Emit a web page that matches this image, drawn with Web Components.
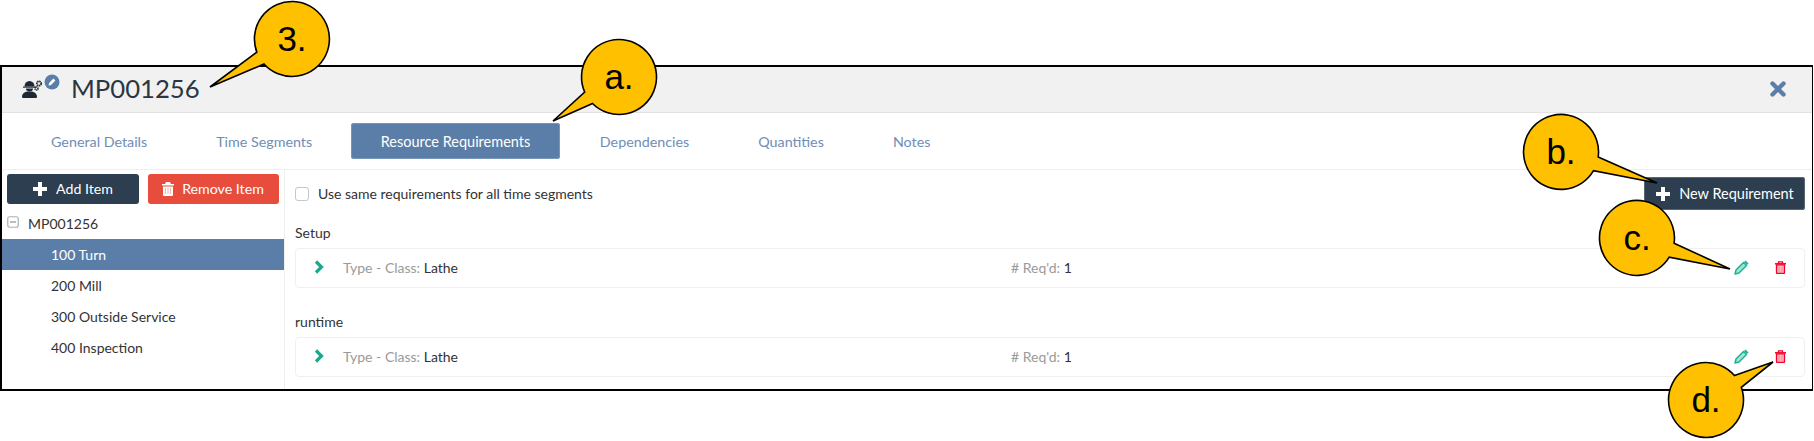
<!DOCTYPE html>
<html>
<head>
<meta charset="utf-8">
<title>MP001256</title>
<style>
  html, body { margin: 0; background: #fff; }
  body { font-family: "Lato", "Liberation Sans", sans-serif; color: #333; width: 1814px; height: 441px; overflow: hidden; position: relative; }
</style>
</head>
<body>
<mp-window>
  <mp-header slot="header" title="MP001256"></mp-header>
  <mp-tab slot="tabs">General Details</mp-tab>
  <mp-tab slot="tabs">Time Segments</mp-tab>
  <mp-tab slot="tabs" active>Resource Requirements</mp-tab>
  <mp-tab slot="tabs">Dependencies</mp-tab>
  <mp-tab slot="tabs">Quantities</mp-tab>
  <mp-tab slot="tabs">Notes</mp-tab>
  <mp-sidebar slot="side">
    <mp-button slot="buttons" icon="plus" tone="dark">Add Item</mp-button>
    <mp-button slot="buttons" icon="trash" tone="red">Remove Item</mp-button>
    <tree-row root>MP001256</tree-row>
    <tree-row selected>100 Turn</tree-row>
    <tree-row>200 Mill</tree-row>
    <tree-row>300 Outside Service</tree-row>
    <tree-row>400 Inspection</tree-row>
  </mp-sidebar>
  <mp-requirements slot="main">
    <req-section label="Setup" type="Lathe" count="1"></req-section>
    <req-section label="runtime" type="Lathe" count="1" second></req-section>
  </mp-requirements>
</mp-window>
<call-out text="3." cx="292" cy="39" tip="210,87" a="264,64" b="257,52"></call-out>
<call-out text="a." cx="619" cy="77" tip="553,121" a="593,103" b="585,92"></call-out>
<call-out text="b." cx="1561" cy="152" tip="1657,183" a="1598,157" b="1594,171"></call-out>
<call-out text="c." cx="1637" cy="238" tip="1730,269" a="1673,243" b="1669,257"></call-out>
<call-out text="d." cx="1706" cy="400" tip="1773,362" a="1734,376" b="1742,387"></call-out>

<script>
const ICONS = {
  plus: `<svg width="16" height="16" viewBox="0 0 16 16"><path d="M6 1h4v5h5v4h-5v5H6v-5H1V6h5z" fill="#fff"/></svg>`,
  trash: `<svg width="12" height="14" viewBox="0 0 12 14"><path d="M4 0h4l1 2h3v1.500H0V2h3zM1 4.500h10V13a1 1 0 0 1-1 1H2a1 1 0 0 1-1-1z" fill="#fff"/><path d="M3.500 6v6M6 6v6M8.500 6v6" stroke="#f3b1a9" stroke-width="1"/></svg>`
};

class MpWindow extends HTMLElement {
  constructor() {
    super();
    this.attachShadow({ mode: "open" });
    this.shadowRoot.innerHTML = `
      <style>
        :host { display: flex; flex-direction: column; box-sizing: border-box; width: 1813px; height: 326px; margin: 65px 0 0 0; border: 2px solid #000; border-right-width: 1px; background: #fff; }
        .tabs { display: flex; gap: 10px; height: 36px; padding: 10px 19.500px; border-bottom: 1px solid #eee; }
        .body { flex: 1; display: flex; min-height: 0; }
      </style>
      <slot name="header"></slot>
      <div class="tabs"><slot name="tabs"></slot></div>
      <div class="body"><slot name="side"></slot><slot name="main"></slot></div>
    `;
  }
}

class MpHeader extends HTMLElement {
  constructor() {
    super();
    this.attachShadow({ mode: "open" });
    const title = this.getAttribute("title") || "";
    this.shadowRoot.innerHTML = `
      <style>
        :host { display: flex; align-items: center; box-sizing: border-box; height: 46px; padding: 0 26px 0 19px; background: #f1f1f1; border-bottom: 1px solid #e2e2e2; }
        h1 { margin: -3px 0 0 8px; font: 400 25.700px/30px "Lato", sans-serif; color: #2b3642; }
        .x { margin: -2px 0 0 auto; display: flex; }
        .ico { display: flex; margin-top: 1px; }
        svg { overflow: visible; }
      </style>
      <div class="ico">
        <svg width="42" height="30" viewBox="0 0 42 30">
          <path d="M3.500 11.500a5 5.500 0 0 1 10 0z" fill="#1c2833"/>
          <path d="M2 11.500h13v1.200H2z" fill="#1c2833"/>
          <path d="M5 13.500h7a3.500 3 0 0 1-7 0z" fill="#1c2833"/>
          <path d="M1 22c0-3.500 2.500-5.500 7.500-5.500S16 18.500 16 22a1 1 0 0 1-1 1H2a1 1 0 0 1-1-1z" fill="#1c2833"/>
          <circle cx="18" cy="8.500" r="2.200" fill="none" stroke="#1c2833" stroke-width="1.800" stroke-dasharray="1.400 .5"/>
          <circle cx="15.500" cy="13.500" r="1.500" fill="none" stroke="#1c2833" stroke-width="1.500" stroke-dasharray="1.100 .4"/>
          <circle cx="31" cy="7" r="7.500" fill="#5b7ea8"/>
          <path d="M27.500 10.500l.6-2.600 4.300-4.300 2 2-4.300 4.300z" fill="#fff"/>
        </svg>
      </div>
      <h1>${title}</h1>
      <div class="x">
        <svg width="16" height="16" viewBox="0 0 16 16"><path d="M2.500 2.500l11 11M13.500 2.500l-11 11" stroke="#5b7ea8" stroke-width="4.400" stroke-linecap="round"/></svg>
      </div>
    `;
  }
}

class MpTab extends HTMLElement {
  constructor() {
    super();
    this.attachShadow({ mode: "open" });
    this.shadowRoot.innerHTML = `
      <style>
        :host { display: flex; align-items: center; padding: 0 29.500px; height: 36px; border-radius: 3px; font-size: 14.300px; color: #6f8db5; white-space: nowrap; }
        :host([active]) { margin-left: -1px; padding: 0 30px; font-size: 14.500px; background: #5b7ea8; color: #fff; box-shadow: inset 0 0 0 1px #7896ba; }
      </style>
      <slot></slot>
    `;
  }
}

class MpButton extends HTMLElement {
  constructor() {
    super();
    this.attachShadow({ mode: "open" });
    const icon = this.getAttribute("icon");
    this.shadowRoot.innerHTML = `
      <style>
        :host { display: flex; align-items: center; justify-content: center; gap: 8px; box-sizing: border-box; height: 30px; border-radius: 3px; font-size: 14.500px; color: #fff; white-space: nowrap; }
        :host([tone]) { font-size: 14.200px; padding: 0 1px 1px 0; }
        :host([tone="dark"]) { background: #2c3e50; }
        :host([tone="red"]) { background: #e74c3c; }
        .i { display: flex; }
      </style>
      <span class="i">${ICONS[icon]}</span><slot></slot>
    `;
  }
}

class MpSidebar extends HTMLElement {
  constructor() {
    super();
    this.attachShadow({ mode: "open" });
    this.shadowRoot.innerHTML = `
      <style>
        :host { display: block; box-sizing: border-box; width: 283px; flex: none; border-right: 1px solid #eee; }
        .buttons { display: grid; grid-template-columns: 132px 131px; gap: 9px; padding: 4px 0 0 5px; }
      </style>
      <div class="buttons"><slot name="buttons"></slot></div>
      <slot></slot>
    `;
  }
}

class TreeRow extends HTMLElement {
  constructor() {
    super();
    this.attachShadow({ mode: "open" });
    const root = this.hasAttribute("root");
    this.shadowRoot.innerHTML = `
      <style>
        :host { display: flex; align-items: center; height: 31px; padding-left: 49px; font-size: 14px; color: #333; }
        :host([root]) { box-sizing: border-box; height: 35px; padding: 3px 0 0 5px; gap: 9px; }
        :host([selected]) { background: #5b7ea8; color: #fff; }
        svg { display: block; margin-top: -2px; }
      </style>
      ${root ? `<svg width="12" height="12" viewBox="0 0 12 12"><rect x=".75" y=".75" width="10.500" height="10.500" rx="2" fill="none" stroke="#a9b0b5" stroke-width="1.200"/><path d="M3 6h6" stroke="#8c9499" stroke-width="1.200"/></svg>` : ""}
      <slot></slot>
    `;
  }
}

class MpRequirements extends HTMLElement {
  constructor() {
    super();
    this.attachShadow({ mode: "open" });
    this.shadowRoot.innerHTML = `
      <style>
        :host { display: block; flex: 1; padding: 7px 7px 0 10px; min-width: 0; }
        .top { display: flex; align-items: center; justify-content: space-between; height: 33px; }
        label { display: flex; align-items: center; gap: 9px; font-size: 14px; color: #333; }
        .box { width: 12px; height: 12px; border: 1px solid #c3c8cc; border-radius: 3px; background: #fff; }
        .new { width: 161px; height: 33px; background: #2c3e50; box-shadow: inset 0 0 0 1px #566779; }
      </style>
      <div class="top">
        <label><span class="box"></span>Use same requirements for all time segments</label>
        <mp-button class="new" icon="plus">New Requirement</mp-button>
      </div>
      <slot></slot>
    `;
  }
}

class ReqSection extends HTMLElement {
  constructor() {
    super();
    this.attachShadow({ mode: "open" });
    const label = this.getAttribute("label");
    const type = this.getAttribute("type");
    const count = this.getAttribute("count");
    this.shadowRoot.innerHTML = `
      <style>
        :host { display: block; margin-top: 14px; font-size: 14px; color: #333; }
        :host([second]) { margin-top: 25px; }
        .label { height: 24px; line-height: 18px; }
        .card { display: flex; align-items: center; box-sizing: border-box; height: 40px; padding: 0 0 2px 18px; border: 1px solid #f0f0f0; border-radius: 4px; }
        .chev { display: flex; width: 29px; flex: none; }
        .type { width: 668px; flex: none; }
        .k { color: #9a9a9a; }
        .acts { margin-left: auto; display: flex; align-items: center; gap: 26px; padding-right: 18px; }
        svg { display: block; }
      </style>
      <div class="label">${label}</div>
      <div class="card">
        <span class="chev"><svg width="11" height="14" viewBox="0 0 11 14"><path d="M2 1.500l5.500 5.500-5.500 5.500" fill="none" stroke="#1aa98c" stroke-width="3.200"/></svg></span>
        <span class="type"><span class="k">Type - Class:</span> ${type}</span>
        <span><span class="k"># Req'd:</span> ${count}</span>
        <span class="acts">
          <svg width="15" height="15" viewBox="0 0 15 15"><path d="M1 14l1-4 7.500-7.500 3 3L5 13z" fill="#a9e3d5" stroke="#1ab394" stroke-width="1.500" stroke-linejoin="round"/><path d="M10 2l1.500-1.500 3 3L13 5z" fill="#1ab394"/></svg>
          <svg width="11" height="13" viewBox="0 0 11 13"><path d="M1.500 3.800h8v7.700a1 1 0 0 1-1 1h-6a1 1 0 0 1-1-1z" fill="#f7b9bf" stroke="#f5002a" stroke-width="1.300"/><path d="M0 2.800h11" stroke="#f5002a" stroke-width="1.500"/><path d="M3.500 2.300V.8h4v1.500" fill="none" stroke="#f5002a" stroke-width="1.300"/><path d="M4 5.500v5.500M7 5.500v5.500" stroke="#f08a96" stroke-width="1"/></svg>
        </span>
      </div>
    `;
  }
}

class CallOut extends HTMLElement {
  constructor() {
    super();
    this.attachShadow({ mode: "open" });
    const cx = +this.getAttribute("cx");
    const cy = +this.getAttribute("cy");
    const r = 37.5;
    // snap the tail's base points onto the circle so the arc closes cleanly
    const snap = (s) => {
      const [x, y] = s.split(",").map(Number);
      const t = Math.atan2(y - cy, x - cx);
      return [cx + r * Math.cos(t), cy + r * Math.sin(t)].map((n) => n.toFixed(1)).join(" ");
    };
    const tip = this.getAttribute("tip").replace(",", " ");
    const a = snap(this.getAttribute("a"));
    const b = snap(this.getAttribute("b"));
    this.shadowRoot.innerHTML = `
      <style>
        :host { position: absolute; left: 0; top: 0; width: 1814px; height: 441px; pointer-events: none; }
        svg { display: block; }
        text { font: 400 35px "Liberation Sans", Arial, sans-serif; fill: #000; text-anchor: middle; }
      </style>
      <svg width="1814" height="441" viewBox="0 0 1814 441">
        <path d="M${a} L${tip} L${b} A${r} ${r} 0 1 1 ${a} Z" fill="#ffc000" stroke="#000" stroke-width="1.600" stroke-linejoin="miter"/>
        <text x="${cx}" y="${cy + 12}">${this.getAttribute("text")}</text>
      </svg>
    `;
  }
}

customElements.define("mp-window", MpWindow);
customElements.define("mp-header", MpHeader);
customElements.define("mp-tab", MpTab);
customElements.define("mp-button", MpButton);
customElements.define("mp-sidebar", MpSidebar);
customElements.define("tree-row", TreeRow);
customElements.define("mp-requirements", MpRequirements);
customElements.define("req-section", ReqSection);
customElements.define("call-out", CallOut);
</script>
</body>
</html>
